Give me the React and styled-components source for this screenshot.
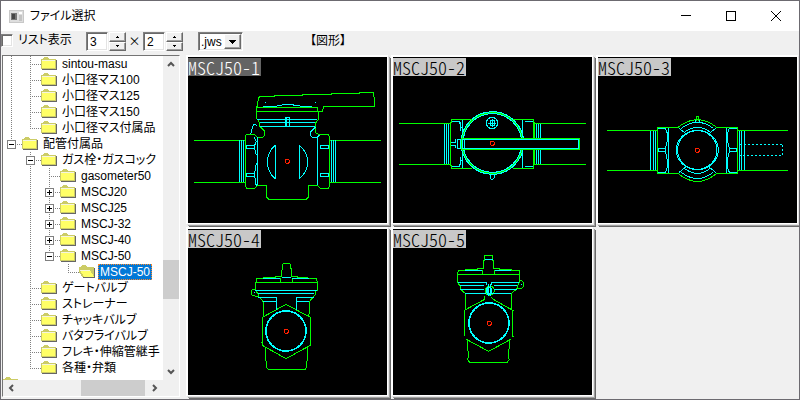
import React, { useState } from 'react';
import styled, { createGlobalStyle } from 'styled-components';

const GlobalStyle = createGlobalStyle`
  * {
    box-sizing: border-box;
  }
  body {
    margin: 0;
    background: #6c6a70;
    color: #000;
    font-family: 'Liberation Sans', 'Noto Sans CJK JP', sans-serif;
    font-size: 12px;
    line-height: 16px;
  }
  button, input, select {
    font: inherit;
    color: inherit;
    margin: 0;
    padding: 0;
    border-radius: 0;
  }
`;

const Window = styled.div`
  display: flex;
  flex-direction: column;
  height: 100vh;
  border: 1px solid #6c6a70;
  background: #f0f0f0;
  overflow: hidden;
`;

const TitleBar = styled.header`
  display: flex;
  align-items: center;
  flex: none;
  height: 30px;
  padding: 0 1px 0 8px;
  background: #fff;
`;

const Title = styled.h1`
  flex: 1;
  margin: 0 0 0 6px;
  font-size: 12px;
  font-weight: 400;
  font-feature-settings: 'palt';
`;

const CaptionButton = styled.button`
  display: flex;
  align-items: center;
  justify-content: center;
  width: 45px;
  height: 30px;
  border: 0;
  background: transparent;
`;

const Toolbar = styled.div`
  display: flex;
  align-items: flex-start;
  flex: none;
  height: 23px;
  padding-top: 1px;
`;

const CheckLabel = styled.label`
  display: flex;
  align-items: center;
  width: 85px;
  gap: 5px;
  font-feature-settings: 'palt';
`;

const sunken = `
  border: 1px solid;
  border-color: #808080 #fff #fff #808080;
  box-shadow: inset 1px 1px 0 #696969, inset -1px -1px 0 #e3e3e3;
`;

const raised = `
  border: 1px solid;
  border-color: #fff #696969 #696969 #fff;
  box-shadow: inset -1px -1px 0 #a0a0a0;
  background: #f0f0f0;
`;

const Checkbox = styled.input`
  appearance: none;
  width: 12px;
  height: 13px;
  background: #fff;
  ${sunken}
`;

const Field = styled.input`
  width: 22px;
  height: 19px;
  padding-left: 3px;
  background: #fff;
  outline: none;
  ${sunken}
`;

const Spinner = styled.div`
  display: flex;
  flex-direction: column;
  width: 17px;
  height: 19px;
`;

const SpinButton = styled.button`
  display: flex;
  flex: 1;
  min-height: 0;
  align-items: center;
  justify-content: center;
  ${raised}
`;

const NumberGroup = styled.div`
  display: flex;
  gap: 1px;
`;

const Times = styled.span`
  width: 17px;
  padding-top: 1px;
  text-align: center;
  font-family: 'Noto Sans CJK JP', sans-serif;
`;

const SelectBox = styled.div`
  display: flex;
  width: 45px;
  height: 19px;
  margin-left: 15px;
  padding: 1px;
  background: #fff;
  ${sunken}
`;

const Select = styled.select`
  appearance: none;
  flex: 1;
  min-width: 0;
  padding-left: 1px;
  border: 0;
  outline: none;
  background: transparent;
  line-height: 14px;
`;

const SelectArrow = styled.span`
  display: flex;
  align-items: center;
  justify-content: center;
  width: 17px;
  ${raised}
`;

const FolderTitle = styled.span`
  margin-left: 67px;
  padding-top: 1px;
  font-feature-settings: 'palt';
`;

const Body = styled.div`
  display: flex;
  flex: 1;
  min-height: 0;
`;

const TreePane = styled.aside`
  display: grid;
  flex: none;
  grid-template-columns: 1fr 16px;
  grid-template-rows: 1fr 16px;
  width: 178px;
  margin: 1px 6px 2px 1px;
  border: 1px solid;
  border-color: #747474 #fff #fff #747474;
`;

const Tree = styled.ul`
  margin: 0;
  padding: 0;
  background: #fff;
  list-style: none;
  overflow: hidden;
`;

const TreeRow = styled.li`
  display: flex;
  height: 16px;
  white-space: nowrap;
`;

const TreeLabel = styled.button`
  height: 16px;
  margin-left: 3px;
  padding: 0 2px;
  border: 0;
  background: ${p => (p.$selected ? '#0078d7' : 'transparent')};
  color: ${p => (p.$selected ? '#fff' : '#000')};
  outline: ${p => (p.$selected ? '1px dotted #ff8728' : 'none')};
  outline-offset: -1px;
  line-height: 16px;
  font-feature-settings: 'palt';
`;

const ScrollTrack = styled.div`
  display: flex;
  flex-direction: ${p => (p.$vertical ? 'column' : 'row')};
  background: #f0f0f0;
`;

const ScrollButton = styled.button`
  display: flex;
  flex: none;
  align-items: center;
  justify-content: center;
  width: 16px;
  height: 16px;
  border: 0;
  background: transparent;
`;

const ScrollSpace = styled.div`
  flex: ${p => p.$grow};
`;

const ScrollThumb = styled.div`
  flex: 0 0 ${p => p.$length}px;
  background-color: #cdcdcd;
`;

const Gallery = styled.main`
  display: grid;
  flex: 1;
  min-width: 0;
  padding-top: 1px;
  grid-template-columns: repeat(3, minmax(205px, 1fr));
  grid-template-rows: repeat(2, minmax(0, 1fr));
  overflow: hidden;
`;

const Tile = styled.figure`
  display: flex;
  position: relative;
  min-height: 0;
  margin: 0 3px 3px 0;
  border: solid #fff;
  border-width: 2px 1px 1px 2px;
  background: #000;
  box-shadow: 1px 1px 0 #e3e3e3, 2px 2px 0 #a0a0a0, 3px 3px 0 #696969;
`;

const TileName = styled.figcaption`
  position: absolute;
  top: 1px;
  left: 0;
  height: 18px;
  padding-right: 1px;
  background: ${p => (p.$active ? '#646464' : '#c8c8c8')};
  color: ${p => (p.$active ? '#fff' : '#000')};
  font-family: 'Noto Sans CJK JP', monospace;
  font-size: 18px;
  font-weight: 300;
  line-height: 18px;
  font-feature-settings: 'hwid';
`;

const Drawing = styled.svg`
  width: 100%;
  height: 100%;
  fill: none;
  stroke-width: 3;
  shape-rendering: crispEdges;
`;

const Glyph = styled.svg`
  display: block;
  flex: none;
  shape-rendering: crispEdges;
`;

const AppIcon = () => (
  <Glyph width="15" height="13" viewBox="0 0 15 13">
    <rect width="15" height="13" fill="#c8c8c8" />
    <rect x="1" y="1" width="13" height="11" fill="#dedede" />
    <rect x="2" y="3" width="6" height="7" fill="#777" />
    <rect x="3" y="4" width="3" height="5" fill="#444" />
    <rect x="10" y="2" width="3" height="2" fill="#fff" />
    <rect x="10" y="5" width="3" height="6" fill="#c4c4c4" />
  </Glyph>
);

const Triangle = ({ up, size = 3 }) => (
  <Glyph width={size} height={(size + 1) / 2} viewBox="0 0 10 5" preserveAspectRatio="none">
    <path d={up ? 'M0 5L5 0L10 5Z' : 'M0 0H10L5 5Z'} />
  </Glyph>
);

const chevrons = {
  up: 'M2 7L5 4L8 7',
  down: 'M2 3L5 6L8 3',
  left: 'M7 2L4 5L7 8',
  right: 'M3 2L6 5L3 8'
};

const Chevron = ({ dir }) => (
  <svg width="10" height="10" viewBox="0 0 10 10" fill="none" stroke="#555" strokeWidth="2">
    <path d={chevrons[dir]} />
  </svg>
);

const FolderIcon = ({ open }) => (
  <Glyph width="16" height="16" viewBox="0 0 16 16">
    <path d="M2 3V2H3V1H7V2H8V3H15V4H0V3Z" fill="#cccc66" />
    <rect y="3" width="15" height="10" fill="#cccc66" />
    <path d="M15 4H16V14H1V13H15Z" fill="#666" />
    <rect x="1" y="4" width="13" height="8" fill="#ffff66" />
    <path d="M1 4H14V5H1Z" fill="#f4f4e0" />
    {open && (
      <g>
        <rect x="1" y="4" width="13" height="9" fill="#cccc66" />
        <path d="M0 8V14H4Z" fill="#fff" />
        <path d="M1 6H11L15 13H5Z" fill="#ffff66" />
        <path d="M1 6H11" stroke="#f4f4e0" />
      </g>
    )}
  </Glyph>
);

// v: line straight through, t: branch, e: last branch, x/m: box with + or -,
// y/n: the same for the last item of its level
const Guide = ({ kind }) => {
  const box = 'xymn'.includes(kind);
  const last = 'eyn'.includes(kind);
  return (
    <Glyph width="19" height="16" viewBox="0 0 19 16" fill="none" stroke="#808080">
      {kind !== '.' && <path d={last ? 'M8.5 0V8' : 'M8.5 0V16'} strokeDasharray="1 1" />}
      {kind !== '.' && kind !== 'v' && <path d="M8 8.5H19" strokeDasharray="1 1" />}
      {box && <rect x="4.5" y="4.5" width="8" height="8" fill="#fff" />}
      {box && <path d="M6 8.5H11" stroke="#000" />}
      {(kind === 'x' || kind === 'y') && <path d="M8.5 6V11" stroke="#000" />}
    </Glyph>
  );
};

const folders = [
  ['vt', 'sintou-masu'],
  ['vt', '小口径マス100'],
  ['vt', '小口径マス125'],
  ['vt', '小口径マス150'],
  ['ve', '小口径マス付属品'],
  ['n', '配管付属品'],
  ['.m', 'ガス栓・ガスコック'],
  ['.vt', 'gasometer50'],
  ['.vx', 'MSCJ20'],
  ['.vx', 'MSCJ25'],
  ['.vx', 'MSCJ-32'],
  ['.vx', 'MSCJ-40'],
  ['.vn', 'MSCJ-50'],
  ['.v.e', 'MSCJ-50', true],
  ['.t', 'ゲートバルブ'],
  ['.t', 'ストレーナー'],
  ['.t', 'チャッキバルブ'],
  ['.t', 'バタフライバルブ'],
  ['.t', 'フレキ・伸縮管継手'],
  ['.e', '各種・弁類'],
  ['', '']
];

const GREEN = '#00ff00';
const CYAN = '#00ffff';
const RED = '#ff2000';

const SideValve = () => (
  <Drawing viewBox="6 9 597 498">
    <g stroke={GREEN}>
      <path d="M24 259H178M24 385H178M430 259H585M430 385H585" />
      <path d="M214 160V148L220 127H264V124H348V121H436V118H520V115H563L566 157H414L409 172H397" />
      <path d="M212 157V196M212 160H394V172M212 172H397V196L388 208V235L400 243L406 241H427L430 250V396L427 403H404L394 394H367V430L360 436H248L242 430V394H214L206 403H182L178 396V247L182 241H205L214 250H230L236 244V232L221 217V208L215 196" />
    </g>
    <g stroke={CYAN}>
      <path d="M160 259V385M166 259V385M172 259V385M436 259V385M442 259V385M448 259V385" />
      <path d="M181 274H206V283H181ZM181 358H206V367H181ZM403 274H428V283H403ZM403 358H428V367H403Z" />
      <path d="M214 250V394M394 250V394M205 250L211 262L206 274M206 283L211 304M211 328L206 358M206 367L211 397" />
      <path d="M268 274V374M268 274C236 300 236 348 268 374M340 274V374M340 274C373 300 373 348 340 374" />
      <path d="M214 196H394M222 205H388M222 217H388M231 157H268L292 152H316L348 157H378M237 145H240M387 145H390" />
      <path d="M299 190H310V216H299ZM302 190V216M212 214L203 211L199 220L194 241M388 220L373 235V245L380 250H394L400 244" />
    </g>
    <circle cx="304" cy="322" r="6" stroke={RED} />
  </Drawing>
);

const TopValve = () => (
  <Drawing viewBox="9 9 597 498">
    <g stroke={CYAN}>
      <path d="M163 208V331M169 208V331M175 208V331M440 208V253M446 208V253M452 208V253M440 287V331M446 287V331M452 287V331" />
      <path d="M217 196V343M397 196V253M397 287V343M184 202H208L214 222M184 337H208L214 317M406 202H430M406 337H430M211 205V232M211 308V334" />
      <circle cx="307" cy="267" r="94" />
      <circle cx="307" cy="267" r="88" />
      <circle cx="306" cy="207" r="17" />
      <path d="M306 195V219M294 207H318M300 200H312V214H300Z" />
      <path d="M300 363V370L304 376H309L313 370V363M184 264H196V256M184 274H196V283M202 256H214M202 256V284H214M211 256V284" />
    </g>
    <g stroke={GREEN}>
      <path d="M27 208H181M27 331H181M434 208H588M434 331H588" />
      <path d="M247 196H184V205H181V334H184V343H247M370 196H431V253M434 205V253M370 343H431V287M434 287V334" />
      <circle cx="307" cy="267" r="91" />
    </g>
    <rect x="214" y="253" width="355" height="33" fill="#000" stroke={GREEN} />
    <path d="M217 256H566V283H217ZM223 256V283" stroke={CYAN} />
    <circle cx="307" cy="268" r="6" stroke={RED} />
  </Drawing>
);

const BottomValve = () => (
  <Drawing viewBox="12 9 597 498">
    <g stroke={CYAN}>
      <path d="M169 229V349M178 229V349M184 229V349M436 229V349M442 229V349M451 229V349" />
      <path d="M223 220V358M397 220V358M193 223H214L220 238V260L214 283H193M193 292H214L220 318V340L214 355H193" />
      <path d="M428 223H406L400 238V260L406 283H428M428 292H406L400 318V340L406 355H428M193 283V292M214 283V292M406 283V292M428 283V292" />
      <ellipse cx="310" cy="288" rx="63" ry="59" />
      <ellipse cx="310" cy="288" rx="59" ry="58" />
      <path d="M271 235Q310 205 349 235M271 343Q310 373 349 343M262 223Q310 187 358 223M262 355Q310 392 358 355" />
      <path d="M254 222L279 242M366 222L341 242M254 356L279 336M366 356L341 336M304 197V208M317 197V208" />
      <path d="M437 271H566V304H437" strokeDasharray="6 6" />
    </g>
    <g stroke={GREEN}>
      <path d="M39 229H190M39 349H190M431 229H582M431 349H582" />
      <path d="M252 220H190V358H252Q310 407 368 358H431V220H368Q310 174 252 220" />
      <path d="M307 202V187H314V202" />
    </g>
    <circle cx="310" cy="289" r="6" stroke={RED} />
  </Drawing>
);

const FrontValve = () => (
  <Drawing viewBox="6 9 597 498">
    <g stroke={GREEN}>
      <path d="M208 193V169H211V157H232V154H268V151H286L290 115L293 112H310L314 115L317 151H334V154H364V157H391L394 169V193H388V205L370 227V262L367 271M208 169H394M284 169V157M319 169V157M208 193L217 205V211L232 227V271" />
      <path d="M208 190H199L196 196V205L202 209L216 212" />
      <path d="M300 235L373 274V358L300 398L229 358V274ZM239 364V394L242 425L248 430H358L361 425L364 394V364M226 349L229 349" />
    </g>
    <g stroke={CYAN}>
      <path d="M232 156H283M319 156H370M289 154H314M208 193H394M217 202H385M217 214H271V252M385 214H331V252M232 226H271M331 226H370M205 199H208" />
      <circle cx="300" cy="315" r="60" strokeWidth="5" />
    </g>
    <circle cx="301" cy="316" r="6" stroke={RED} />
  </Drawing>
);

const BackValve = () => (
  <Drawing viewBox="9 9 597 498">
    <g stroke={GREEN}>
      <path d="M202 169V145L206 133H226V130H262V127H280V103H284V88H308V103H311V127H328V130H364V133H388V169L379 190L364 202V250M202 145H388M277 145V133M314 145V133M202 169L211 181V190L226 202V250" />
      <path d="M391 163L397 166L401 172V181L395 187H382" />
      <path d="M284 211V220L223 253V331M305 214L308 219L370 254L367 259V331H371M229 340L296 376L362 340M232 343V370L235 376V394L232 400L238 408H352L358 400L355 394V373L358 367V343" />
      <circle cx="299" cy="194" r="14" />
    </g>
    <g stroke={CYAN}>
      <path d="M226 132H277M314 132H364M284 100H310M205 169H289V178M388 169H304V178M211 178H283M311 178H380M211 190H283M311 190H380M226 202H289M304 202H364M394 175H397" />
      <path d="M296 175V210M300 175V210M292 184H302V205H292Z" />
      <circle cx="297" cy="194" r="9" />
      <circle cx="297" cy="291" r="60" strokeWidth="5" />
    </g>
    <circle cx="298" cy="292" r="6" stroke={RED} />
  </Drawing>
);

const tiles = [
  ['MSCJ50-1', SideValve],
  ['MSCJ50-2', TopValve],
  ['MSCJ50-3', BottomValve],
  ['MSCJ50-4', FrontValve],
  ['MSCJ50-5', BackValve]
];

const NumberBox = ({ label, initial }) => {
  const [value, setValue] = useState(initial);
  return (
    <NumberGroup>
      <Field aria-label={label} value={value} onChange={e => setValue(Number(e.target.value) || 1)} />
      <Spinner>
        <SpinButton aria-label={`${label} +`} onClick={() => setValue(value + 1)}>
          <Triangle up />
        </SpinButton>
        <SpinButton aria-label={`${label} -`} onClick={() => setValue(Math.max(1, value - 1))}>
          <Triangle />
        </SpinButton>
      </Spinner>
    </NumberGroup>
  );
};

const ScrollBar = ({ vertical, before, after, thumb }) => (
  <ScrollTrack $vertical={vertical}>
    <ScrollButton aria-label={vertical ? 'up' : 'left'}>
      <Chevron dir={vertical ? 'up' : 'left'} />
    </ScrollButton>
    <ScrollSpace $grow={before} />
    <ScrollThumb $length={thumb} />
    <ScrollSpace $grow={after} />
    <ScrollButton aria-label={vertical ? 'down' : 'right'}>
      <Chevron dir={vertical ? 'down' : 'right'} />
    </ScrollButton>
  </ScrollTrack>
);

const App = () => (
  <React.Fragment>
    <GlobalStyle />
    <Window>
      <TitleBar>
        <AppIcon />
        <Title>ファイル選択</Title>
        <CaptionButton aria-label="最小化">
          <Glyph width="10" height="10" stroke="#000"><path d="M0 4.5H10" /></Glyph>
        </CaptionButton>
        <CaptionButton aria-label="最大化">
          <Glyph width="10" height="10" stroke="#000" fill="none"><path d="M.5 .5H9.5V9.5H.5Z" /></Glyph>
        </CaptionButton>
        <CaptionButton aria-label="閉じる">
          <svg width="10" height="10" stroke="#000"><path d="M0 0L10 10M10 0L0 10" /></svg>
        </CaptionButton>
      </TitleBar>
      <Toolbar>
        <CheckLabel>
          <Checkbox type="checkbox" />
          リスト表示
        </CheckLabel>
        <NumberBox label="横" initial={3} />
        <Times>×</Times>
        <NumberBox label="縦" initial={2} />
        <SelectBox>
          <Select aria-label="種類" defaultValue=".jws">
            <option>.jws</option>
            <option>.jwk</option>
          </Select>
          <SelectArrow><Triangle size={7} /></SelectArrow>
        </SelectBox>
        <FolderTitle>【図形】</FolderTitle>
      </Toolbar>
      <Body>
        <TreePane>
          <Tree>
            {folders.map(([guides, name, open], i) => (
              <TreeRow key={i}>
                {guides.split('').map((kind, n) => <Guide key={n} kind={kind} />)}
                <FolderIcon open={open} />
                {name && <TreeLabel $selected={open}>{name}</TreeLabel>}
              </TreeRow>
            ))}
          </Tree>
          <ScrollBar vertical before={188} after={65} thumb={39} />
          <ScrollBar before={62} after={2} thumb={64} />
        </TreePane>
        <Gallery>
          {tiles.map(([name, Valve], i) => (
            <Tile key={name}>
              <Valve />
              <TileName $active={i === 0}>{name}</TileName>
            </Tile>
          ))}
        </Gallery>
      </Body>
    </Window>
  </React.Fragment>
);

export default App;
